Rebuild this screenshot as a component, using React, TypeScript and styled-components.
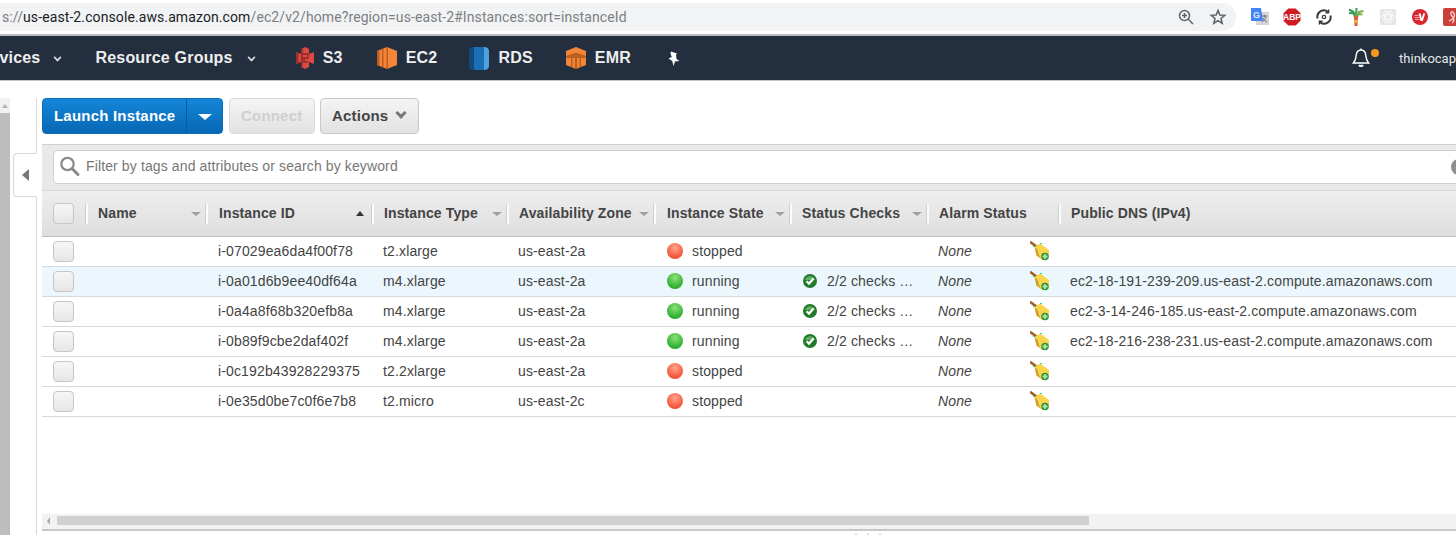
import React from 'react'
import styled, { createGlobalStyle } from 'styled-components'

const GlobalStyle = createGlobalStyle`
  html, body {
    margin: 0;
    padding: 0;
    background: #fff;
    overflow: hidden;
  }
  * {
    box-sizing: border-box;
  }
`

const COLUMNS = '44px 120px 166px 135px 147px 136px 137px 132px 397px'

interface Instance {
  id: string
  type: string
  zone: string
  running: boolean
  dns?: string
  selected?: boolean
}

const INSTANCES: Instance[] = [
  { id: 'i-07029ea6da4f00f78', type: 't2.xlarge', zone: 'us-east-2a', running: false },
  {
    id: 'i-0a01d6b9ee40df64a',
    type: 'm4.xlarge',
    zone: 'us-east-2a',
    running: true,
    dns: 'ec2-18-191-239-209.us-east-2.compute.amazonaws.com',
    selected: true,
  },
  {
    id: 'i-0a4a8f68b320efb8a',
    type: 'm4.xlarge',
    zone: 'us-east-2a',
    running: true,
    dns: 'ec2-3-14-246-185.us-east-2.compute.amazonaws.com',
  },
  {
    id: 'i-0b89f9cbe2daf402f',
    type: 'm4.xlarge',
    zone: 'us-east-2a',
    running: true,
    dns: 'ec2-18-216-238-231.us-east-2.compute.amazonaws.com',
  },
  { id: 'i-0c192b43928229375', type: 't2.2xlarge', zone: 'us-east-2a', running: false },
  { id: 'i-0e35d0be7c0f6e7b8', type: 't2.micro', zone: 'us-east-2c', running: false },
]

const HEADERS = [
  { label: 'Name', sort: 'none', pad: 12 },
  { label: 'Instance ID', sort: 'up', pad: 13 },
  { label: 'Instance Type', sort: 'none', pad: 12 },
  { label: 'Availability Zone', sort: 'none', pad: 12 },
  { label: 'Instance State', sort: 'none', pad: 13 },
  { label: 'Status Checks', sort: 'none', pad: 12 },
  { label: 'Alarm Status', pad: 12 },
  { label: 'Public DNS (IPv4)', pad: 12 },
]

const SearchIcon = () => (
  <svg width="22" height="22" viewBox="0 0 22 22">
    <circle cx="8.5" cy="9" r="6.2" fill="#fff" stroke="#8a8a8a" strokeWidth="2.2" />
    <path d="M13 13.5 L19 19.5" stroke="#8a8a8a" strokeWidth="3" strokeLinecap="round" />
  </svg>
)

const ZoomIcon = () => (
  <svg width="18" height="18" viewBox="0 0 18 18" fill="none" stroke="#5f6368" strokeWidth="1.5">
    <circle cx="7.5" cy="7.5" r="5" />
    <path d="M11.3 11.3 L16 16 M5 7.5 H10 M7.5 5 V10" />
  </svg>
)

const StarIcon = () => (
  <svg width="18" height="18" viewBox="0 0 18 18" fill="none" stroke="#5f6368" strokeWidth="1.5">
    <path d="M9 2.4 L10.9 7 L15.8 7.3 L12 10.5 L13.2 15.3 L9 12.7 L4.8 15.3 L6 10.5 L2.2 7.3 L7.1 7 Z" />
  </svg>
)

const TranslateIcon = () => (
  <svg width="18" height="18" viewBox="0 0 18 18">
    <rect x="5" y="4" width="13" height="13" fill="#d5d5d5" />
    <path d="M11 8 H16 M13.5 7 V9 M15 8.5 C14.5 11 12.8 13 11 14 M12 10 C13 12 14.5 13.5 16 14" stroke="#6b7280" strokeWidth="1" fill="none" />
    <path d="M0 0 H10 L12 13 H0 Z" fill="#4285f4" />
    <text x="2" y="10" fontFamily="Liberation Sans, sans-serif" fontWeight="700" fontSize="9" fill="#dce8fb">G</text>
  </svg>
)

const AbpIcon = () => (
  <svg width="18" height="18" viewBox="0 0 18 18">
    <path d="M5.3 0.5 H12.7 L17.5 5.3 V12.7 L12.7 17.5 H5.3 L0.5 12.7 V5.3 Z" fill="#d01c20" />
    <text x="9" y="12" textAnchor="middle" fontFamily="Liberation Sans, sans-serif" fontWeight="700" fontSize="8.5" fill="#fff">ABP</text>
  </svg>
)

const SyncIcon = () => (
  <svg width="18" height="18" viewBox="0 0 18 18" fill="none" stroke="#3c3c3c" strokeWidth="2">
    <path d="M2.6 10.5 A6.5 6.5 0 0 1 13 3.8" />
    <path d="M15.4 7.5 A6.5 6.5 0 0 1 5 14.2" />
    <path d="M13.6 1.4 V4.8 H10.4 M4.4 16.6 V13.2 H7.6" strokeWidth="1.4" />
    <circle cx="9" cy="9" r="1.7" strokeWidth="1.2" />
  </svg>
)

const TreeIcon = () => (
  <svg width="18" height="20" viewBox="0 0 18 20" fill="none">
    <path d="M8 10 L6.5 5 L2 2.5 M6.8 6.5 L2 6" stroke="#3f9a5a" strokeWidth="2.2" />
    <path d="M9 10 L9.5 1" stroke="#4ba564" strokeWidth="2.2" />
    <path d="M10 10 L12 5 L16.5 4 M11.4 7 L15.5 7.5" stroke="#7db04a" strokeWidth="2.2" />
    <path d="M6.8 9 H11.2 L10.5 19 H7.5 Z" fill="#d95f4b" />
    <path d="M7 13 H11 L10.8 16 H7.3 Z" fill="#e8b04a" />
  </svg>
)

const AtomIcon = () => (
  <svg width="18" height="18" viewBox="-1 -1 18 18">
    <rect width="16" height="16" fill="#e6e6e6" />
    <g fill="none" stroke="#fafafa" strokeWidth="1">
      <ellipse cx="8" cy="8" rx="6.5" ry="2.6" />
      <ellipse cx="8" cy="8" rx="6.5" ry="2.6" transform="rotate(60 8 8)" />
      <ellipse cx="8" cy="8" rx="6.5" ry="2.6" transform="rotate(120 8 8)" />
    </g>
  </svg>
)

const VpnIcon = () => (
  <svg width="18" height="18" viewBox="-1 -1 18 18">
    <circle cx="8" cy="8" r="8" fill="#d7282f" />
    <path d="M2.5 6.5 H6.5 M2.5 8.5 H7 M3 10.5 H7.5" stroke="#f3a9ac" strokeWidth="1" />
    <path d="M6.5 4.5 H8.6 L9.8 9.5 L11.2 4.5 H13.2 L10.8 12 H8.6 Z" fill="#fff" />
  </svg>
)

const RedExtIcon = () => (
  <svg width="18" height="18" viewBox="0 0 18 18">
    <rect width="18" height="18" rx="2" fill="#c9403a" />
    <path d="M6 13 C11 11 13 7 10 4 C8 3 7 6 9 8 C11 10 12 13 9 15" stroke="#f8d6d3" strokeWidth="1.3" fill="none" />
  </svg>
)

const BellIcon = () => (
  <svg width="20" height="22" viewBox="0 0 20 22" fill="none" stroke="#fff" strokeWidth="1.4">
    <path d="M10 3 C6.6 3 5.4 5.6 5.2 8.4 C5 11.6 4.4 13.8 2.4 16 H17.6 C15.6 13.8 15 11.6 14.8 8.4 C14.6 5.6 13.4 3 10 3 Z" />
    <path d="M8 18 C8.6 19.3 11.4 19.3 12 18" strokeWidth="1.8" />
    <path d="M10 1.6 V3" />
  </svg>
)

const S3Icon = () => (
  <svg width="18" height="22" viewBox="0 0 18 22">
    <path d="M9 0 L13 2 V7 L18 5 V17 L13 15 V20 L9 22 L5 20 V15 L0 17 V5 L5 7 V2 Z" fill="#dd4a41" />
    <path d="M5 2 L7 1 V21 L5 20 Z M0 5 L2.5 6 V16 L0 17 Z" fill="#9c2f2a" />
    <path d="M7 7 H12 V11 H8 V15 H12" stroke="#8a2623" strokeWidth="1.3" fill="none" />
  </svg>
)

const Ec2Icon = () => (
  <svg width="20" height="22" viewBox="0 0 20 22">
    <path d="M10 0 L20 4 V18 L10 22 L0 18 V4 Z" fill="#f58536" />
    <path d="M0 4 L2.5 3 V19 L0 18 Z M5 2 H6.5 V20 H5 Z M9.5 0 H11 V22 H9.5 Z" fill="#b85f23" />
  </svg>
)

const RdsIcon = () => (
  <svg width="20" height="23" viewBox="0 0 20 23">
    <path d="M5 0 H15 C18 0 20 2 20 4 V19 C20 21 18 23 15 23 H5 C2 23 0 21 0 19 V4 C0 2 2 0 5 0 Z" fill="#1a6fb5" />
    <path d="M5 0 C2 0 0 2 0 4 V19 C0 21 2 23 5 23 Z" fill="#15497a" />
    <path d="M15 0 C18 0 20 2 20 4 V19 C20 21 18 23 15 23 Z" fill="#4fa0dc" />
  </svg>
)

const EmrIcon = () => (
  <svg width="20" height="22" viewBox="0 0 20 22">
    <path d="M10 0 L20 4 V18 L10 22 L0 18 V4 Z" fill="#f58536" />
    <path d="M0 9 L10 5.5 L20 9 V11 H0 Z" fill="#b85f23" />
    <path d="M5 11 H6.5 V20 H5 Z M9 11 H11 V22 H9 Z M13.5 11 H15 V20 H13.5 Z" fill="#b85f23" />
  </svg>
)

const PinIcon = () => (
  <svg width="14" height="15" viewBox="0 0 14 15">
    <path d="M4 0.5 L10 2.5 L9 4 L9.5 8 L12.5 10 L8 10.5 L6.5 15 L5.2 10 L1.5 7.5 L4.8 6 L3.4 2.4 Z" fill="#fff" />
  </svg>
)

const CheckBadge = () => (
  <svg width="14" height="14" viewBox="0 0 14 14">
    <circle cx="7" cy="7" r="7" fill="#1f7a2a" />
    <path d="M2 6 A5.2 5.2 0 0 1 12 6 Z" fill="#5fb060" />
    <path d="M3.6 7.2 L6 9.6 L10.6 4.6" stroke="#fff" strokeWidth="2.2" fill="none" />
  </svg>
)

const BroomIcon = () => (
  <svg width="20" height="20" viewBox="0 0 20 20">
    <path d="M1 1.5 L7 6" stroke="#a0622a" strokeWidth="2.8" strokeLinecap="round" />
    <path d="M4.5 6 L10 2.5 L19 9 L19 14 L12 19 L6.5 14.5 Z" fill="#f8d54c" />
    <path d="M4.5 6 L6.5 14.5 L10 17 L7.5 9 Z" fill="#cf9c33" />
    <path d="M3 5.5 H5 M10 2.5 H12" stroke="#18e28a" strokeWidth="1" />
    <circle cx="15" cy="15.5" r="3.8" fill="#2f8f3b" />
    <path d="M15 12.9 V18.1 M12.4 15.5 H17.6" stroke="#a8e69a" strokeWidth="1.8" />
  </svg>
)

const Page = styled.div`
  width: 1456px;
  height: 535px;
  overflow: hidden;
  display: flex;
  flex-direction: column;
  font-family: 'Liberation Sans', Arial, sans-serif;
  background: #fff;
`

const BrowserBar = styled.div`
  flex: 0 0 36px;
  display: flex;
  align-items: flex-start;
  padding-top: 3px;
  background: #fff;
  border-bottom: 2px solid #bdbdbd;
`

const Omnibox = styled.div`
  width: 1236px;
  height: 28px;
  background: #f1f3f4;
  border-radius: 0 14px 14px 0;
  display: flex;
  align-items: center;
  font-family: Roboto, sans-serif;
  font-size: 14px;
  white-space: nowrap;
  color: #7d7f82;
  overflow: hidden;
`

const UrlText = styled.span`
  flex: 1;
  margin-left: 2px;
  letter-spacing: 0.1px;
`

const UrlHost = styled.span`
  color: #202124;
`

const OmniIcons = styled.div`
  display: flex;
  align-items: center;
  gap: 14px;
  padding-right: 9px;
`

const Extensions = styled.div`
  flex: 1;
  height: 28px;
  display: flex;
  align-items: center;
  gap: 14px;
  padding-left: 15px;
  overflow: hidden;
  & > svg {
    flex: none;
  }
`

const NavBar = styled.nav`
  flex: 0 0 45px;
  display: flex;
  align-items: center;
  background: #232f3e;
  border-bottom: 1px solid #c4c4c4;
  white-space: nowrap;
`

const NavText = styled.span<{ $gap?: number }>`
  color: #eee;
  font-size: 16px;
  font-weight: 700;
  letter-spacing: 0.2px;
  margin-left: ${(p) => p.$gap ?? 0}px;
`

const NavCaret = styled.span<{ $gap: number }>`
  width: 7px;
  height: 7px;
  margin-left: ${(p) => p.$gap}px;
  border-right: 2px solid #ddd;
  border-bottom: 2px solid #ddd;
  transform: translateY(-1px) rotate(45deg) scale(0.8);
`

const NavService = styled.div<{ $gap: number }>`
  display: flex;
  align-items: center;
  margin-left: ${(p) => p.$gap}px;
  gap: 9px;
`

const NavRight = styled.div`
  margin-left: auto;
  display: flex;
  align-items: center;
`

const BellWrap = styled.div`
  position: relative;
  display: flex;
  margin-right: 28px;
`

const BellDot = styled.span`
  position: absolute;
  top: 2px;
  right: -8px;
  width: 8px;
  height: 8px;
  border-radius: 50%;
  background: #f7981d;
`

const UserName = styled.span`
  color: #e6e6e6;
  font-family: Roboto, sans-serif;
  font-size: 13px;
`

const Body = styled.div`
  flex: 1;
  display: flex;
  min-height: 0;
`

const SideRail = styled.aside`
  flex: 0 0 37px;
  padding-top: 17px;
`

const RailInner = styled.div`
  height: 100%;
  display: flex;
  border-right: 1px solid #d8d8d8;
`

const RailScroll = styled.div`
  width: 10px;
  display: flex;
  flex-direction: column;
  background: #bdbdbd;
`

const RailArrow = styled.div`
  flex: 0 0 15px;
  display: flex;
  align-items: center;
  justify-content: center;
  background: #f1f1f1;
  &::after {
    content: '';
    border-style: solid;
    border-width: 0 3px 4px 3px;
    border-color: transparent transparent #b5b5b5 transparent;
  }
`

const CollapseTab = styled.div`
  width: 24px;
  height: 44px;
  margin: 55px -1px 0 3px;
  background: #fff;
  border: 1px solid #d8d8d8;
  border-right: 1px solid #fff;
  border-radius: 4px 0 0 4px;
  display: flex;
  align-items: center;
  justify-content: center;
  position: relative;
  &::after {
    content: '';
    border-style: solid;
    border-width: 6px 7px 6px 0;
    border-color: transparent #777 transparent transparent;
  }
`

const Main = styled.main`
  flex: 1;
  min-width: 0;
  padding-left: 5px;
  display: flex;
  flex-direction: column;
`

const Toolbar = styled.div`
  flex: 0 0 63px;
  display: flex;
  align-items: flex-start;
  padding-top: 17px;
`

const SplitButton = styled.div`
  width: 181px;
  height: 36px;
  display: flex;
  border: 1px solid #0b6cb8;
  border-radius: 4px;
  background: linear-gradient(#1586d8, #0767b5);
  color: #fff;
  font-size: 15px;
  font-weight: 700;
  letter-spacing: 0.2px;
`

const SplitLabel = styled.div`
  flex: 1;
  display: flex;
  align-items: center;
  padding: 0 0 2px 11px;
  border-right: 1px solid #0a5a9c;
`

const SplitCaret = styled.div`
  flex: 0 0 35px;
  display: flex;
  align-items: center;
  justify-content: center;
  &::after {
    content: '';
    border-style: solid;
    border-width: 6px 7px 0 7px;
    border-color: #fff transparent transparent transparent;
    margin-top: 2px;
  }
`

const GreyButton = styled.div<{ $width: number; $gap: number; $disabled?: boolean }>`
  width: ${(p) => p.$width}px;
  height: 36px;
  margin-left: ${(p) => p.$gap}px;
  padding: 0 0 2px 11px;
  display: flex;
  align-items: center;
  gap: 9px;
  border: 1px solid ${(p) => (p.$disabled ? '#dcdcdc' : '#c8c8c8')};
  border-radius: 4px;
  background: linear-gradient(#f4f4f4, #e2e2e2);
  color: ${(p) => (p.$disabled ? '#cfcfcf' : '#444')};
  font-size: 15px;
  font-weight: 700;
  letter-spacing: 0.2px;
`

const ActionsCaret = styled.span`
  width: 8px;
  height: 8px;
  border-right: 3px solid #777;
  border-bottom: 3px solid #777;
  transform: translateY(-2px) rotate(45deg);
`

const FilterBand = styled.div`
  flex: 0 0 46px;
  background: #e9e9e9;
  border-top: 1px solid #cfcfcf;
  padding: 5px 0 0 11px;
  overflow: hidden;
`

const SearchBox = styled.div`
  width: 1420px;
  height: 34px;
  display: flex;
  align-items: center;
  gap: 5px;
  padding: 0 5px 2px 5px;
  background: #fff;
  border: 1px solid #cfcfcf;
  border-radius: 5px;
  color: #777;
  font-size: 14px;
  letter-spacing: 0.12px;
`

const SearchClear = styled.span`
  margin: 2px 0 0 auto;
  width: 16px;
  height: 16px;
  border-radius: 50%;
  background: #8f8f8f;
`

const HeadRow = styled.div`
  flex: 0 0 47px;
  display: grid;
  grid-template-columns: ${COLUMNS};
  background: linear-gradient(#eeeeee, #dedede);
  border-top: 1px solid #d6d6d6;
  border-bottom: 1px solid #bdbdbd;
`

const CheckCell = styled.div`
  display: flex;
  align-items: center;
  padding-left: 11px;
`

const CheckBox = styled.span`
  width: 21px;
  height: 21px;
  border: 1px solid #c6c6c6;
  border-radius: 4px;
  background: linear-gradient(#f6f6f6, #e6e6e6);
`

const HeadCell = styled.div<{ $pad: number }>`
  position: relative;
  display: flex;
  align-items: center;
  justify-content: space-between;
  padding: 0 5px 2px ${(p) => p.$pad}px;
  color: #444;
  font-size: 14px;
  font-weight: 700;
  letter-spacing: 0.12px;
  white-space: nowrap;
  &::before {
    content: '';
    position: absolute;
    left: -1px;
    top: 13px;
    height: 20px;
    width: 2px;
    background: #fbfbfb;
    border-left: 1px solid #cfcfcf;
  }
`

const SortMark = styled.span<{ $up: boolean }>`
  border-style: solid;
  border-width: ${(p) => (p.$up ? '0 4px 5px 4px' : '4px 5px 0 5px')};
  border-color: ${(p) =>
    p.$up
      ? 'transparent transparent #333 transparent'
      : '#a0a0a0 transparent transparent transparent'};
  margin: 2px ${(p) => (p.$up ? 3 : 0)}px 0 6px;
`

const Row = styled.div<{ $selected?: boolean }>`
  flex: 0 0 30px;
  display: grid;
  grid-template-columns: ${COLUMNS};
  background: ${(p) => (p.$selected ? '#ebf7fd' : '#fff')};
  border-bottom: 1px solid #d5d9dc;
`

const Cell = styled.div<{ $italic?: boolean; $pad?: number; $gap?: number }>`
  display: flex;
  align-items: center;
  gap: ${(p) => p.$gap ?? 0}px;
  padding-left: ${(p) => p.$pad ?? 11}px;
  padding-bottom: 2px;
  color: #444;
  font-size: 14px;
  letter-spacing: 0.14px;
  font-style: ${(p) => (p.$italic ? 'italic' : 'normal')};
  white-space: nowrap;
`

const AlarmIcon = styled.span`
  margin-left: auto;
  margin-right: 9px;
  display: flex;
`

const StateDot = styled.span<{ $running: boolean }>`
  width: 16px;
  height: 16px;
  border-radius: 50%;
  background: ${(p) =>
    p.$running
      ? 'radial-gradient(circle at 50% 30%, #8ee07a, #2eb02e 70%, #1f8f24)'
      : 'radial-gradient(circle at 50% 30%, #ffa58c, #f4553a 70%, #d8402c)'};
`

const Spacer = styled.div`
  flex: 1;
`

const HScroll = styled.div`
  flex: 0 0 15px;
  display: flex;
  align-items: stretch;
  background: #f2f2f2;
  padding: 2px 0 3px 5px;
  border-bottom: 1px solid #f2f2f2;
  &::before {
    content: '';
    align-self: center;
    border-style: solid;
    border-width: 4px 3px 4px 0;
    border-color: transparent #aaa transparent transparent;
    margin-right: 7px;
  }
`

const HThumb = styled.div`
  width: 1032px;
  background: #d0d0d0;
`

const BottomEdge = styled.div`
  flex: 0 0 6px;
  border-top: 2px solid #c8c8c8;
  display: flex;
  justify-content: center;
  gap: 6px;
  padding: 2px 0 0 238px;
  margin-bottom: -2px;
`

const GripDot = styled.span`
  width: 0;
  height: 0;
  border-style: solid;
  border-width: 0 3px 4px 3px;
  border-color: transparent transparent #d8d8d8 transparent;
`

const App = () => {
  return (
    <Page>
      <GlobalStyle />
      <BrowserBar>
        <Omnibox>
          <UrlText>
            s://<UrlHost>us-east-2.console.aws.amazon.com</UrlHost>
            /ec2/v2/home?region=us-east-2#Instances:sort=instanceId
          </UrlText>
          <OmniIcons>
            <ZoomIcon />
            <StarIcon />
          </OmniIcons>
        </Omnibox>
        <Extensions>
          <TranslateIcon />
          <AbpIcon />
          <SyncIcon />
          <TreeIcon />
          <AtomIcon />
          <VpnIcon />
          <RedExtIcon />
        </Extensions>
      </BrowserBar>

      <NavBar>
        <NavText $gap={-27}>Services</NavText>
        <NavCaret $gap={14} />
        <NavText $gap={34}>Resource Groups</NavText>
        <NavCaret $gap={15} />
        <NavService $gap={41}>
          <S3Icon />
          <NavText>S3</NavText>
        </NavService>
        <NavService $gap={34}>
          <Ec2Icon />
          <NavText>EC2</NavText>
        </NavService>
        <NavService $gap={32}>
          <RdsIcon />
          <NavText>RDS</NavText>
        </NavService>
        <NavService $gap={33}>
          <EmrIcon />
          <NavText>EMR</NavText>
        </NavService>
        <NavService $gap={36}>
          <PinIcon />
        </NavService>
        <NavRight>
          <BellWrap>
            <BellIcon />
            <BellDot />
          </BellWrap>
          <UserName>thinkocap</UserName>
        </NavRight>
      </NavBar>

      <Body>
        <SideRail>
          <RailInner>
            <RailScroll>
              <RailArrow />
            </RailScroll>
            <CollapseTab />
          </RailInner>
        </SideRail>
        <Main>
          <Toolbar>
            <SplitButton>
              <SplitLabel>Launch Instance</SplitLabel>
              <SplitCaret />
            </SplitButton>
            <GreyButton $width={86} $gap={6} $disabled>
              Connect
            </GreyButton>
            <GreyButton $width={99} $gap={5}>
              Actions
              <ActionsCaret />
            </GreyButton>
          </Toolbar>
          <FilterBand>
            <SearchBox>
              <SearchIcon />
              Filter by tags and attributes or search by keyword
              <SearchClear />
            </SearchBox>
          </FilterBand>
          <HeadRow>
            <CheckCell>
              <CheckBox />
            </CheckCell>
            {HEADERS.map((h) => (
              <HeadCell key={h.label} $pad={h.pad}>
                {h.label}
                {h.sort && <SortMark $up={h.sort === 'up'} />}
              </HeadCell>
            ))}
          </HeadRow>
          {INSTANCES.map((row) => (
            <Row key={row.id} $selected={row.selected}>
              <CheckCell>
                <CheckBox />
              </CheckCell>
              <Cell />
              <Cell $pad={12}>{row.id}</Cell>
              <Cell>{row.type}</Cell>
              <Cell>{row.zone}</Cell>
              <Cell $pad={13} $gap={9}>
                <StateDot $running={row.running} />
                {row.running ? 'running' : 'stopped'}
              </Cell>
              <Cell $pad={13} $gap={10}>
                {row.running && (
                  <>
                    <CheckBadge />
                    2/2 checks …
                  </>
                )}
              </Cell>
              <Cell $italic>
                None
                <AlarmIcon>
                  <BroomIcon />
                </AlarmIcon>
              </Cell>
              <Cell>{row.dns}</Cell>
            </Row>
          ))}
          <Spacer />
          <HScroll>
            <HThumb />
          </HScroll>
          <BottomEdge>
            <GripDot />
            <GripDot />
            <GripDot />
          </BottomEdge>
        </Main>
      </Body>
    </Page>
  )
}

export default App
